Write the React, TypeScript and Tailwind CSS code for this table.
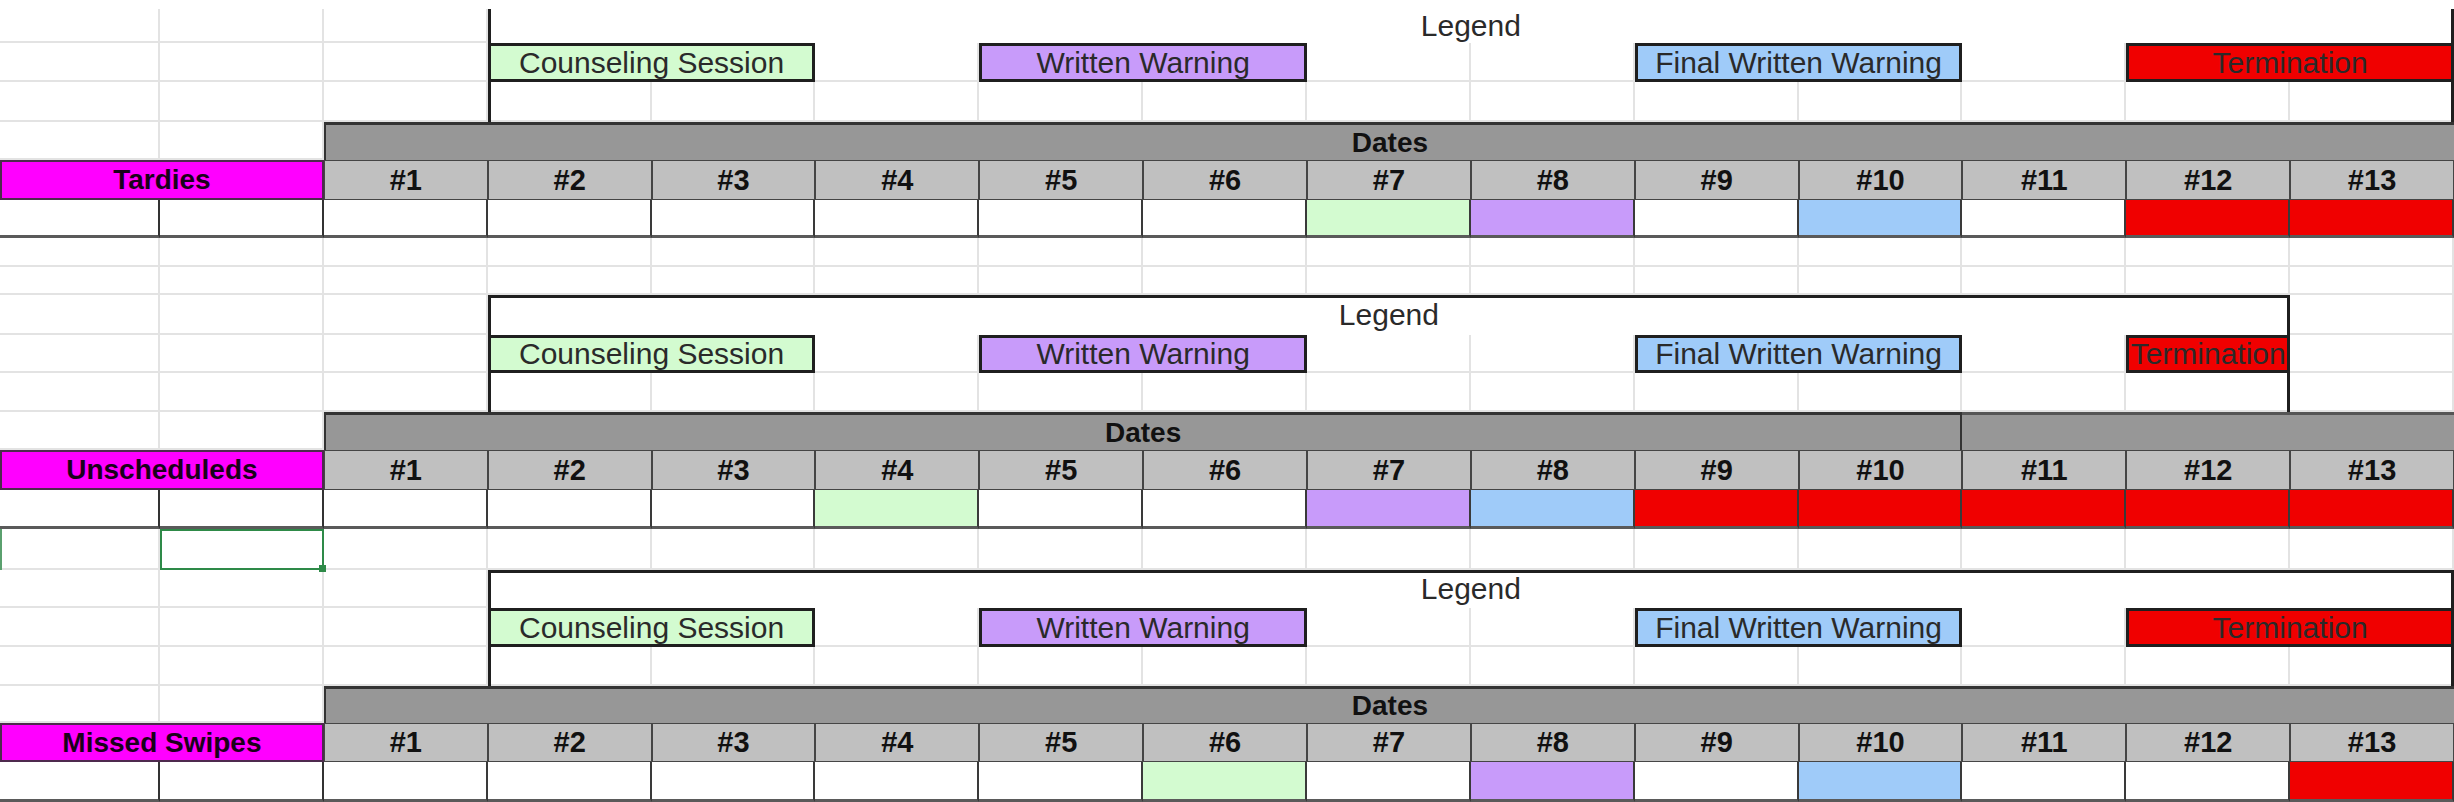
import React from 'react';

const COLS = 'grid-cols-[160px_repeat(14,minmax(0,1fr))]';

type Tone = 'w' | 'g' | 'p' | 'b' | 'r';

const toneBg: Record<Tone, string> = {
  w: 'bg-white',
  g: 'bg-[#d3fbd0]',
  p: 'bg-[#c89bfa]',
  b: 'bg-[#9fcbf9]',
  r: 'bg-[#f00000]',
};

function GridLines({ rows, rowsClass }: { rows: number; rowsClass: string }) {
  return (
    <div className={`col-start-1 row-start-1 grid ${COLS} ${rowsClass}`}>
      {Array.from({ length: rows * 15 }).map((_, i) => (
        <div key={i} className="border-r-2 border-b-2 border-[#e3e3e3]" />
      ))}
    </div>
  );
}

type SectionProps = {
  rows: number;
  rowsClass: string;
  label: string;
  tones: Tone[];
  narrow?: boolean;
  split?: boolean;
  openTop?: boolean;
  selected?: boolean;
};

function LegendBox({ className, children }: { className: string; children: string }) {
  return (
    <div
      className={`row-start-2 flex items-center justify-center border-[3px] border-[#1f1f1f] text-[30px] leading-none text-[#2a2a2a] ${className}`}
    >
      {children}
    </div>
  );
}

function Section({ rows, rowsClass, label, tones, narrow, split, openTop, selected }: SectionProps) {
  return (
    <div className="grid">
      <GridLines rows={rows} rowsClass={rowsClass} />
      <div className={`col-start-1 row-start-1 grid ${COLS} ${rowsClass}`}>
        {/* legend title row (merged) */}
        <div
          className={`col-start-4 row-start-1 flex items-center justify-center bg-white text-[30px] leading-none text-[#2a2a2a] ${
            narrow ? 'col-end-15' : 'col-end-16'
          }`}
        >
          Legend
        </div>

        <LegendBox className="col-start-4 col-span-2 bg-[#d3fbd0]">Counseling Session</LegendBox>
        <LegendBox className="col-start-7 col-span-2 bg-[#c89bfa]">Written Warning</LegendBox>
        <LegendBox className="col-start-11 col-span-2 bg-[#9fcbf9]">Final Written Warning</LegendBox>
        <LegendBox
          className={`col-start-14 bg-[#f00000] text-[#1a0000] ${narrow ? 'col-span-1 whitespace-nowrap' : 'col-span-2'}`}
        >
          Termination
        </LegendBox>

        {/* legend frame */}
        <div
          className={`col-start-4 row-start-1 row-end-4 border-x-[3px] border-[#1f1f1f] ${
            narrow ? 'col-end-15' : 'col-end-16'
          } ${openTop ? '' : 'border-t-[3px]'}`}
        />

        {/* dates bar */}
        {split ? (
          <>
            <div className="col-start-3 col-end-13 row-start-4 flex items-center justify-center border-t-[3px] border-l-2 border-r-2 border-[#333] bg-[#979797] text-[28px] font-bold leading-none text-[#111]">
              Dates
            </div>
            <div className="col-start-13 col-end-16 row-start-4 border-t-[3px] border-[#555] bg-[#979797]" />
          </>
        ) : (
          <div className="col-start-3 col-end-16 row-start-4 flex items-center justify-center border-t-[3px] border-l-2 border-[#333] bg-[#979797] text-[28px] font-bold leading-none text-[#111]">
            Dates
          </div>
        )}

        {/* header row */}
        <div className={`col-start-1 col-end-16 row-start-5 grid ${COLS}`}>
          <div className="col-span-2 flex items-center justify-center border-2 border-[#4d2a4d] bg-[#ff00ff] text-[28px] font-bold leading-none text-[#1a001a]">
            {label}
          </div>
          {tones.map((_, i) => (
            <div
              key={i}
              className="flex items-center justify-center border border-[#454545] bg-[#c0c0c0] text-[29px] font-bold leading-none text-[#111]"
            >
              #{i + 1}
            </div>
          ))}
        </div>

        {/* data row */}
        <div className={`col-start-1 col-end-16 row-start-6 grid ${COLS}`}>
          <div className="border-r-2 border-b-[3px] border-r-[#333] border-b-[#5a5a5a] bg-white" />
          <div className="border-r-2 border-b-[3px] border-r-[#333] border-b-[#5a5a5a] bg-white" />
          {tones.map((t, i) => (
            <div
              key={i}
              className={`border-r-2 border-b-[3px] border-r-[#3a3a3a] border-b-[#5a5a5a] ${toneBg[t]}`}
            />
          ))}
        </div>

        {selected && (
          <>
            <div className="col-start-1 row-start-7 border-l-2 border-[#5aa06e]" />
            <div className="relative col-start-2 row-start-7 border-2 border-[#2e8a48]">
              <div className="absolute -right-[4px] -bottom-[4px] h-[7px] w-[7px] bg-[#2e8a48]" />
            </div>
          </>
        )}
      </div>
    </div>
  );
}

export default function App() {
  return (
    <div className="w-[2454px] h-[802px] overflow-hidden bg-white font-['Liberation_Sans',Arial,sans-serif]">
      <div className="h-[9px]" />
      <Section
        rows={8}
        rowsClass="grid-rows-[34px_39px_40px_38px_40px_38px_29px_28px]"
        label="Tardies"
        tones={['w', 'w', 'w', 'w', 'w', 'w', 'g', 'p', 'w', 'b', 'w', 'r', 'r']}
        openTop
      />
      <Section
        rows={7}
        rowsClass="grid-rows-[40px_38px_39px_38px_40px_39px_41px]"
        label="Unscheduleds"
        tones={['w', 'w', 'w', 'g', 'w', 'w', 'p', 'b', 'r', 'r', 'r', 'r', 'r']}
        narrow
        split
        selected
      />
      <Section
        rows={6}
        rowsClass="grid-rows-[38px_39px_39px_37px_39px_40px]"
        label="Missed Swipes"
        tones={['w', 'w', 'w', 'w', 'w', 'g', 'w', 'p', 'w', 'b', 'w', 'w', 'r']}
      />
    </div>
  );
}
